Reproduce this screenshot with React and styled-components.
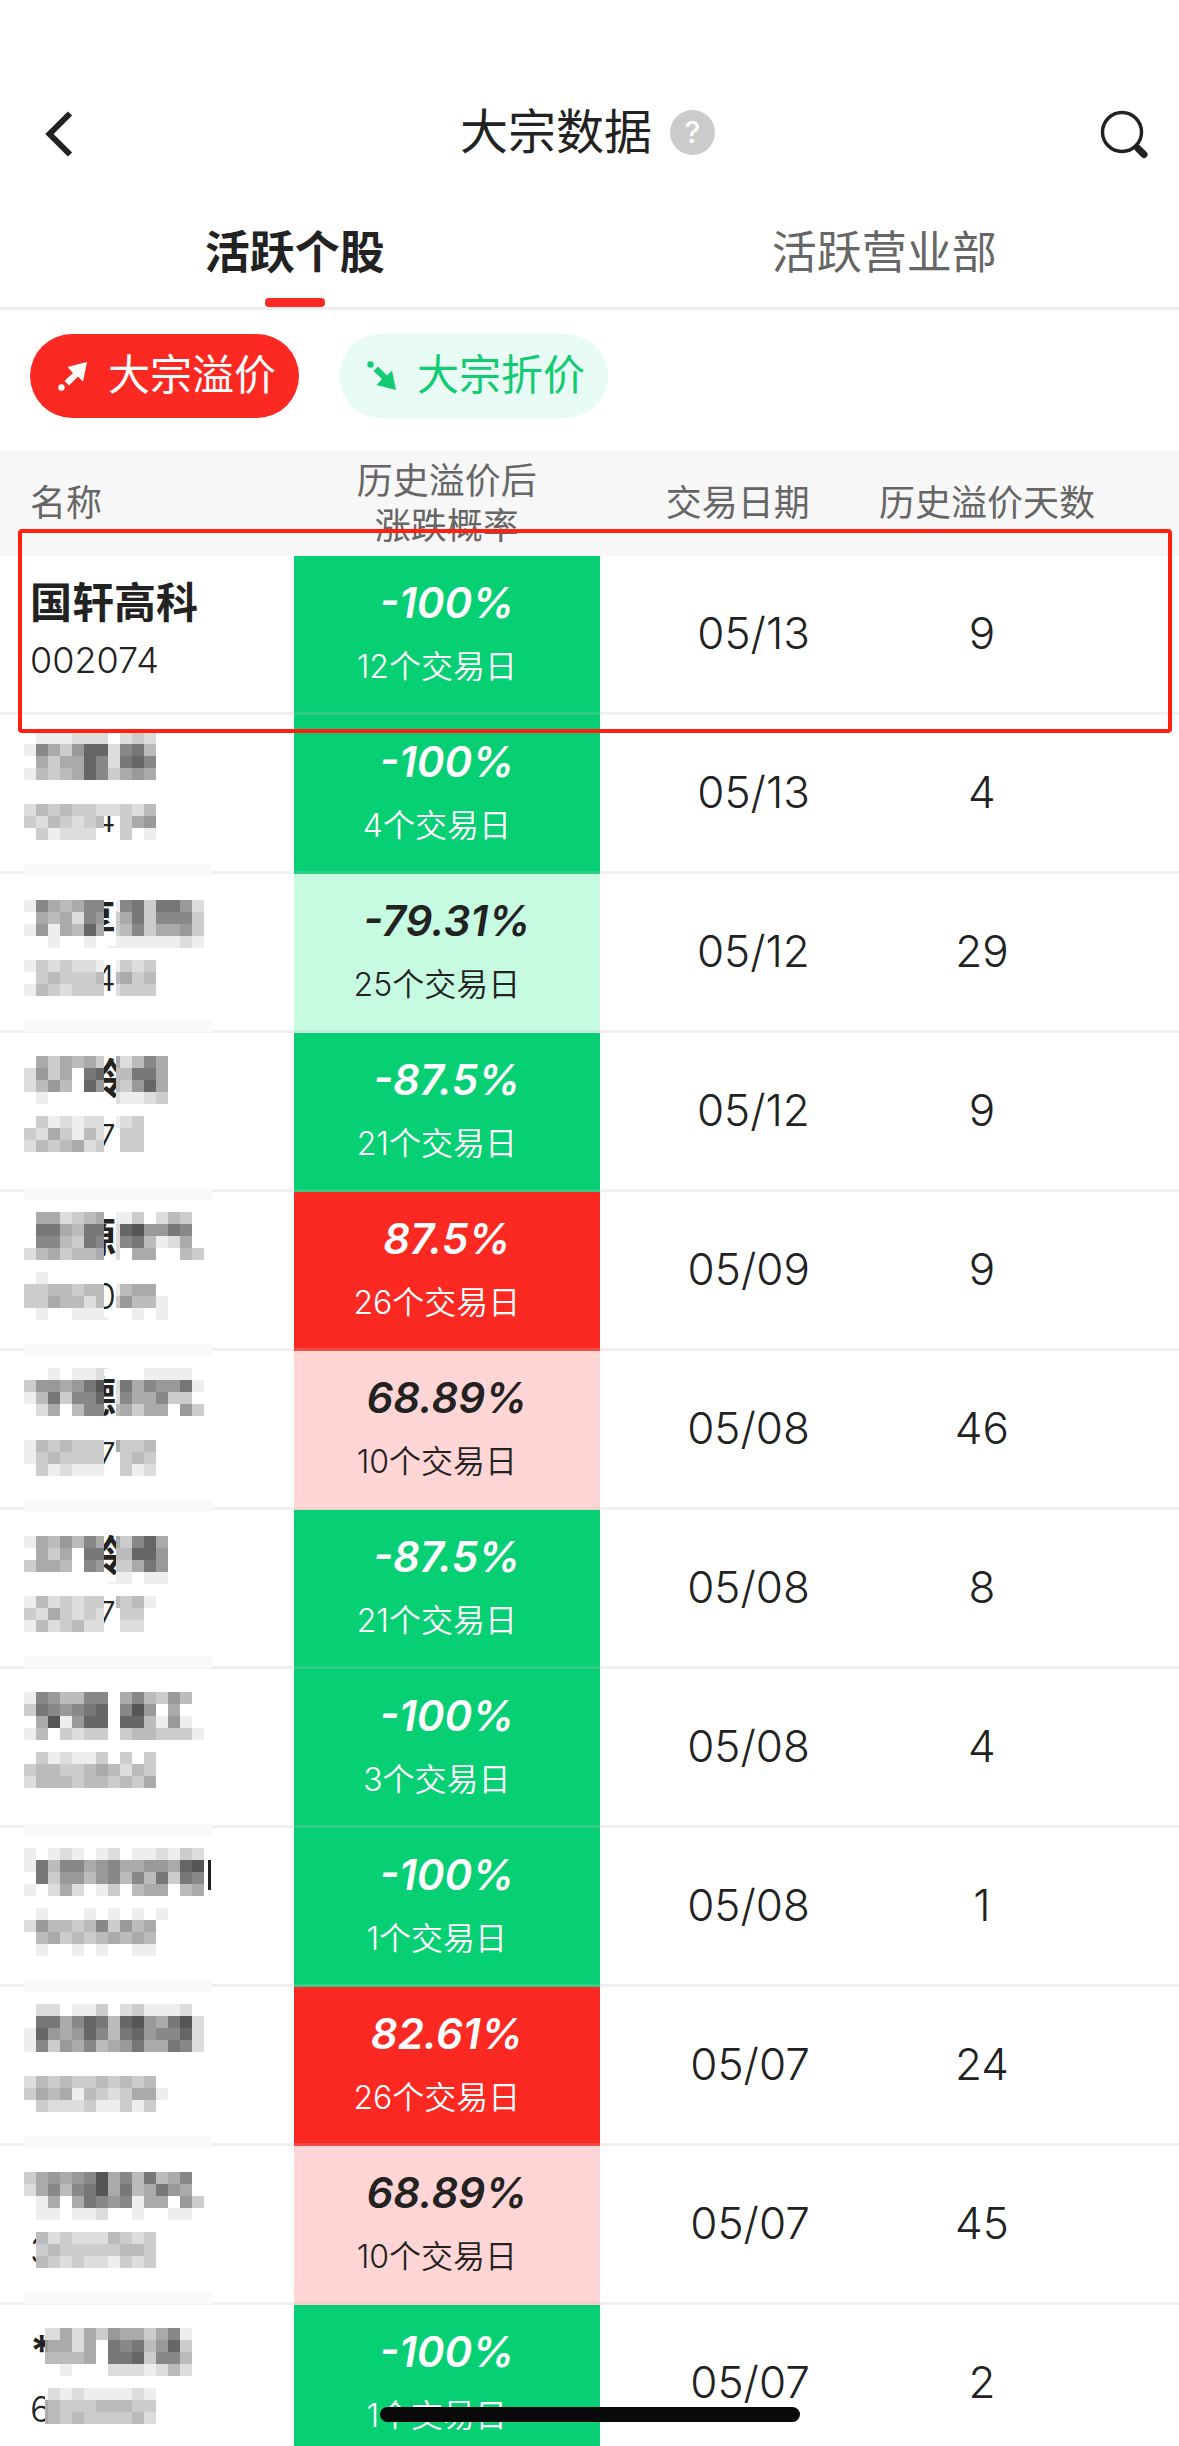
import React, { useState } from "react";
import styled, { createGlobalStyle } from "styled-components";

const CELL = 12;

const tones = {
  green: { background: "#07cf73", color: "#ffffff" },
  lightGreen: { background: "#c6fae1", color: "#222222" },
  red: { background: "#fc2923", color: "#ffffff" },
  pink: { background: "#ffd5d5", color: "#222222" },
};

// name / code masks: one hex digit of grey for each block, "f" is left empty
const rows = [
  {
    name: "国轩高科",
    code: "002074",
    rate: "-100%",
    days: 12,
    tone: "green",
    date: "05/13",
    count: 9,
    marked: true,
  },
  {
    rate: "-100%",
    days: 4,
    tone: "green",
    date: "05/13",
    count: 4,
    mask: {
      nameTop: 17,
      name: ["feeedddfdcd", "e8ac966d87b", "facaa68d768", "ebcba68ca9a"],
      codeTop: 89,
      code: ["dbcbccddcdb", "cdbcdcbfca9", "fcedddffcfe"],
      codeSlit: "4",
      bandTop: 149,
    },
  },
  {
    rate: "-79.31%",
    days: 25,
    tone: "lightGreen",
    date: "05/12",
    count: 29,
    mask: {
      nameTop: 26,
      name: ["e8aba88e87c779d", "fabad89ca7c888c", "e9eab6acb8caa9c", "ffeffefeeeeeede"],
      nameSlit: "享",
      codeTop: 86,
      code: ["ecdcddeecdc", "fcbcccbbacb", "ebcdcccdccc"],
      codeSlit: "4",
      bandTop: 146,
    },
  },
  {
    rate: "-87.5%",
    days: 21,
    tone: "green",
    date: "05/12",
    count: 9,
    mask: {
      nameTop: 23,
      name: ["facabacadb8a", "d9caf76bb77a", "db9bf69bc96a", "fefffffdeedc"],
      nameSlit: "铃",
      nameSlitEnd: 20,
      codeTop: 83,
      code: ["fcededdedcf", "cdacebdfccf", "dbcbadcfccf"],
      codeSlit: "7",
      bandTop: 155,
    },
  },
  {
    rate: "87.5%",
    days: 26,
    tone: "red",
    date: "05/09",
    count: 9,
    mask: {
      nameTop: 20,
      name: ["faadcbaeecfdbcf", "f77ab77d659978f", "f88bc78d87bedaf", "dbacbbadfaaffbc"],
      nameSlit: "源",
      codeTop: 80,
      code: ["fefffffffff", "ccbbcbbebaa", "ccabbdbc9bbe", "feffeeeffefe"],
      codeSlit: "0",
      bandTop: 152,
    },
  },
  {
    rate: "68.89%",
    days: 10,
    tone: "pink",
    date: "05/08",
    count: 46,
    mask: {
      nameTop: 17,
      name: ["ffefeedfffeeeef", "c99a975d7a8997e", "eb7c886d8aa8ccf", "fdafb88bacaaf9c"],
      nameSlit: "德",
      codeTop: 89,
      code: ["ebcbcccaccb", "ecbccccfcbc", "fcedeeefced"],
      codeSlit: "7",
      bandTop: 149,
    },
  },
  {
    rate: "-87.5%",
    days: 21,
    tone: "green",
    date: "05/08",
    count: 8,
    mask: {
      nameTop: 26,
      name: ["eab9b8aac86a", "facaf77bb669", "caabf89cca79", "fffffffeefee"],
      nameSlit: "铃",
      nameSlitEnd: 20,
      codeTop: 86,
      code: ["ebdcdccbcbe", "cdacdcdfccf", "ebdcbddfddf"],
      codeSlit: "7",
      bandTop: 146,
    },
  },
  {
    rate: "-100%",
    days: 3,
    tone: "green",
    date: "05/08",
    count: 4,
    mask: {
      nameTop: 23,
      name: ["e89bb88fa8bc9bf", "c789876f859faff", "fa5e966f66be9ef", "ebfcdccfcbbccce"],
      codeTop: 83,
      code: ["fcedeecfcfc", "cbbccbabdbc", "dbbbcbbcbca"],
      bandTop: 155,
    },
  },
  {
    rate: "-100%",
    days: 1,
    tone: "green",
    date: "05/08",
    count: 1,
    mask: {
      nameTop: 20,
      name: ["efedefedfeedecd", "e7b88a98aa99a65", "f7c99b98b8b7c78", "efdadfecfbaafba"],
      nameEdge: true,
      codeTop: 80,
      code: ["fefffefefefe", "d9bbcb8c9ba", "fbacbcbabab", "feffefeffee"],
      bandTop: 152,
    },
  },
  {
    rate: "82.61%",
    days: 26,
    tone: "red",
    date: "05/07",
    count: 24,
    mask: {
      nameTop: 17,
      name: ["fddfeecfdceeedf", "f77a867b659a75d", "e69a968b769886d", "e8c9a8ba97aa78d"],
      codeTop: 89,
      code: ["dbcbccbcbcb", "cabaebcdcaae", "fcdddceecec"],
      bandTop: 149,
    },
  },
  {
    rate: "68.89%",
    days: 10,
    tone: "pink",
    date: "05/07",
    count: 45,
    mask: {
      nameTop: 26,
      name: ["ca9a985a8b7ba8f", "da8b875a7ba79af", "feafa7898eaaf9c", "feefeedffeffeef"],
      codeTop: 86,
      code: ["fbdcdddbcdc", "fcbcccccbbc", "fbcdcddecdc"],
      codeLead: { text: "3", width: 6 },
      bandTop: 146,
    },
  },
  {
    rate: "-100%",
    days: 1,
    tone: "green",
    date: "05/07",
    count: 2,
    mask: {
      nameTop: 23,
      name: ["fddadac9aaca8e", "f9aadaf787b96c", "fbbbbaf776c88b", "fffefffdddedbd"],
      nameLead: { text: "*", width: 15 },
      codeTop: 83,
      code: ["ffdedeeeede", "fabcccbbbcc", "fabcbccccbd"],
      codeLead: { text: "6", width: 15 },
    },
  },
];

const Blocks = ({ top, lines }) =>
  lines.map((line, y) =>
    [...line].map((level, x) =>
      level === "f" ? null : (
        <rect
          key={`${x}-${y}`}
          x={x * CELL}
          y={top + y * CELL}
          width={CELL}
          height={CELL}
          fill={`#${level.repeat(3)}`}
        />
      )
    )
  );

const Mask = ({ mask }) => (
  <MaskArt viewBox="0 0 192 156" shapeRendering="crispEdges">
    {mask.bandTop && <rect y={mask.bandTop} width="188" height="12" fill="#fafafa" />}
    <Blocks top={mask.nameTop} lines={mask.name} />
    <Blocks top={mask.codeTop} lines={mask.code} />
    {mask.nameSlit && (
      <svg x="80" y="18" width="12" height="54">
        <rect width="12" height="54" fill="#ffffff" />
        <MaskName x={mask.nameSlitEnd || 12} y="43" textAnchor="end">
          {mask.nameSlit}
        </MaskName>
      </svg>
    )}
    {mask.codeSlit && (
      <svg x="80" y={mask.nameSlit ? 80 : 101} width="12" height="45">
        <rect width="12" height="45" fill="#ffffff" />
        <MaskCode x="12" y={mask.nameSlit ? 37 : 16} textAnchor="end">
          {mask.codeSlit}
        </MaskCode>
      </svg>
    )}
    {mask.nameLead && (
      <svg x="6" y="18" width={mask.nameLead.width} height="54">
        <rect width="15" height="54" fill="#ffffff" />
        <MaskName x="0" y="43">{mask.nameLead.text}</MaskName>
      </svg>
    )}
    {mask.codeLead && (
      <svg x="6" y="80" width={mask.codeLead.width} height="45">
        <rect width="15" height="45" fill="#ffffff" />
        <MaskCode x="0" y="37">{mask.codeLead.text}</MaskCode>
      </svg>
    )}
    {mask.nameEdge && <rect x="184" y="32" width="3" height="30" fill="#222222" />}
  </MaskArt>
);

const BackIcon = () => (
  <svg width="44" height="48" viewBox="0 0 44 48" fill="none" aria-hidden="true">
    <path d="M40 3.500 19.500 24 40 44.500" stroke="#222" strokeWidth="6" />
  </svg>
);

const SearchIcon = () => (
  <svg width="50" height="50" viewBox="0 0 50 50" fill="none" aria-hidden="true">
    <circle cx="23" cy="23" r="19.500" stroke="#222" strokeWidth="3.500" />
    <path d="M36 36 39 39" stroke="#222" strokeWidth="5" />
    <path d="M39 39.500 45 45.500" stroke="#222" strokeWidth="7" strokeLinecap="round" />
  </svg>
);

const TrendIcon = ({ down }) => (
  <svg width="30" height="30" viewBox="0 0 30 30" fill="currentColor" aria-hidden="true">
    <g transform={down ? "matrix(1 0 0 -1 0 30)" : undefined}>
      <circle cx="3.500" cy="26.500" r="3.200" />
      <path d="M6.500 20 15 12 9.500 6 29 1 25 20.500 20 15.500 11 24.500Z" />
    </g>
  </svg>
);

const App = () => {
  const [tab, setTab] = useState("stocks");
  const [filter, setFilter] = useState("premium");

  return (
    <Page>
      <GlobalStyle />
      <NavBar>
        <IconButton aria-label="返回">
          <BackIcon />
        </IconButton>
        <TitleGroup>
          <Title>大宗数据</Title>
          <HelpButton>?</HelpButton>
        </TitleGroup>
        <IconButton aria-label="搜索" $end>
          <SearchIcon />
        </IconButton>
      </NavBar>

      <Tabs>
        <Tab $active={tab === "stocks"} onClick={() => setTab("stocks")}>
          活跃个股
        </Tab>
        <Tab $active={tab === "branches"} onClick={() => setTab("branches")}>
          活跃营业部
        </Tab>
      </Tabs>

      <Filters>
        <Pill $active={filter === "premium"} onClick={() => setFilter("premium")}>
          <TrendIcon />
          <PillLabel>大宗溢价</PillLabel>
        </Pill>
        <Pill $active={filter === "discount"} onClick={() => setFilter("discount")}>
          <TrendIcon down />
          <PillLabel>大宗折价</PillLabel>
        </Pill>
      </Filters>

      <TableArea>
        <Table>
          <thead>
            <tr>
              <NameHead>名称</NameHead>
              <RateHead>
                历史溢价后
                <br />
                涨跌概率
              </RateHead>
              <DateHead>交易日期</DateHead>
              <CountHead>历史溢价天数</CountHead>
            </tr>
          </thead>
          <tbody>
            {rows.map((row, i) => (
              <Row key={i} $marked={row.marked}>
                {row.mask ? (
                  <MaskCell>
                    <Mask mask={row.mask} />
                  </MaskCell>
                ) : (
                  <NameCell>
                    <StockName>{row.name}</StockName>
                    <StockCode>{row.code}</StockCode>
                  </NameCell>
                )}
                <RateCell $tone={row.tone}>
                  <Rate>{row.rate}</Rate>
                  <Days>{row.days}个交易日</Days>
                </RateCell>
                <DateCell>{row.date}</DateCell>
                <CountCell>{row.count}</CountCell>
              </Row>
            ))}
          </tbody>
        </Table>
      </TableArea>
      <HomeIndicator />
    </Page>
  );
};
export default App;

const GlobalStyle = createGlobalStyle`
  * {
    box-sizing: border-box;
  }
  body {
    margin: 0;
    background-color: #ffffff;
    color: #222222;
    font-family: Inter, "Noto Sans CJK SC", sans-serif;
  }
  button {
    border: none;
    padding: 0;
    background: none;
    color: inherit;
    font-family: inherit;
    cursor: pointer;
  }
`;
const Page = styled.div`
  display: flex;
  flex-direction: column;
  height: 100vh;
  overflow: hidden;
`;
const NavBar = styled.header`
  display: grid;
  grid-template-columns: 1fr auto 1fr;
  align-items: center;
  height: 132px;
  margin-top: 66px;
  padding: 0 30px;
  flex-shrink: 0;
`;
const IconButton = styled.button`
  display: flex;
  justify-self: ${(props) => (props.$end ? "end" : "start")};
  && {
    padding-top: 4px;
  }
`;
const TitleGroup = styled.div`
  display: flex;
  align-items: center;
  gap: 18px;
  padding-right: 4px;
`;
const Title = styled.h1`
  margin: 0;
  font-size: 48px;
  font-weight: 400;
  line-height: 60px;
`;
const HelpButton = styled.button`
  width: 45px;
  height: 45px;
  border-radius: 50%;
  && {
    background-color: #cbcbcb;
    color: #ffffff;
  }
  font-size: 30px;
  font-weight: 500;
  line-height: 45px;
`;
const Tabs = styled.nav`
  display: flex;
  flex-shrink: 0;
  border-bottom: 3px solid #ededed;
`;
const Tab = styled.button`
  position: relative;
  flex: 1;
  height: 109px;
  && {
    padding-bottom: 6px;
    color: ${(props) => (props.$active ? "#222222" : "#666666")};
  }
  font-size: 45px;
  font-weight: ${(props) => (props.$active ? 700 : 400)};
  &::after {
    content: "";
    display: ${(props) => (props.$active ? "block" : "none")};
    position: absolute;
    bottom: 0;
    left: 50%;
    width: 60px;
    height: 9px;
    margin-left: -30px;
    border-radius: 4px;
    background-color: #fc2923;
  }
`;
const Filters = styled.div`
  display: flex;
  flex-shrink: 0;
  gap: 40px;
  padding: 24px 30px 33px;
`;
const Pill = styled.button`
  display: flex;
  align-items: center;
  gap: 20px;
  height: 84px;
  border-radius: 42px;
  && {
    padding: 0 23px 0 28px;
    background-color: ${(props) => (props.$active ? "#fc2923" : "#e8fbf4")};
    color: ${(props) => (props.$active ? "#ffffff" : "#12cb73")};
  }
`;
const PillLabel = styled.span`
  padding-bottom: 2px;
  font-size: 42px;
  line-height: 60px;
`;
const TableArea = styled.main`
  flex: 1;
  min-height: 0;
  overflow-x: hidden;
  overflow-y: auto;
  scrollbar-width: none;
`;
const Table = styled.table`
  width: 100%;
  table-layout: fixed;
  border-collapse: separate;
  border-spacing: 0;
`;
const HeadCell = styled.th`
  height: 105px;
  padding: 0;
  background-color: #f7f7f7;
  color: #666666;
  font-size: 36px;
  font-weight: 400;
  line-height: 45px;
`;
const NameHead = styled(HeadCell)`
  width: 24.9%;
  padding-left: 30px;
  text-align: left;
`;
const RateHead = styled(HeadCell)`
  width: 26%;
`;
const DateHead = styled(HeadCell)`
  width: 21.1%;
  padding-right: 39px;
  text-align: right;
`;
const CountHead = styled(HeadCell)`
  width: 28%;
  padding-right: 54px;
`;
const Row = styled.tr`
  position: relative;
  &::after {
    content: "";
    display: ${(props) => (props.$marked ? "block" : "none")};
    position: absolute;
    z-index: 1;
    top: -27px;
    right: 7px;
    bottom: -18px;
    left: 18px;
    border: 4px solid #ff2010;
    border-radius: 4px;
    pointer-events: none;
  }
`;
const Cell = styled.td`
  height: 159px;
  padding: 0;
  border-bottom: 3px solid rgba(190, 190, 190, 0.23);
  font-size: 44px;
  font-weight: 350;
`;
const NameCell = styled(Cell)`
  padding-bottom: 8px;
  padding-left: 30px;
`;
const MaskCell = styled(Cell)`
  padding-left: 24px;
`;
const MaskArt = styled.svg`
  display: block;
  width: 192px;
  height: 156px;
  overflow: visible;
`;
const MaskName = styled.text`
  fill: #222222;
  font-size: 42px;
  font-weight: 700;
`;
const MaskCode = styled.text`
  fill: #222222;
  font-size: 36px;
`;
const StockName = styled.div`
  font-size: 42px;
  font-weight: 700;
  line-height: 60px;
`;
const StockCode = styled.div`
  font-size: 36px;
  line-height: 55px;
`;
const RateCell = styled(Cell)`
  background-color: ${(props) => tones[props.$tone].background};
  color: ${(props) => tones[props.$tone].color};
  text-align: center;
`;
const Rate = styled.div`
  font-size: 42px;
  font-style: italic;
  font-weight: 600;
  line-height: 66px;
`;
const Days = styled.div`
  padding-right: 20px;
  font-size: 32px;
  line-height: 62px;
`;
const DateCell = styled(Cell)`
  padding-right: 39px;
  padding-bottom: 3px;
  text-align: right;
`;
const CountCell = styled(Cell)`
  padding-right: 64px;
  padding-bottom: 3px;
  text-align: center;
`;
const HomeIndicator = styled.div`
  position: fixed;
  bottom: 24px;
  left: 50%;
  width: 420px;
  height: 15px;
  margin-left: -210px;
  border-radius: 8px;
  background-color: #09090b;
`;
